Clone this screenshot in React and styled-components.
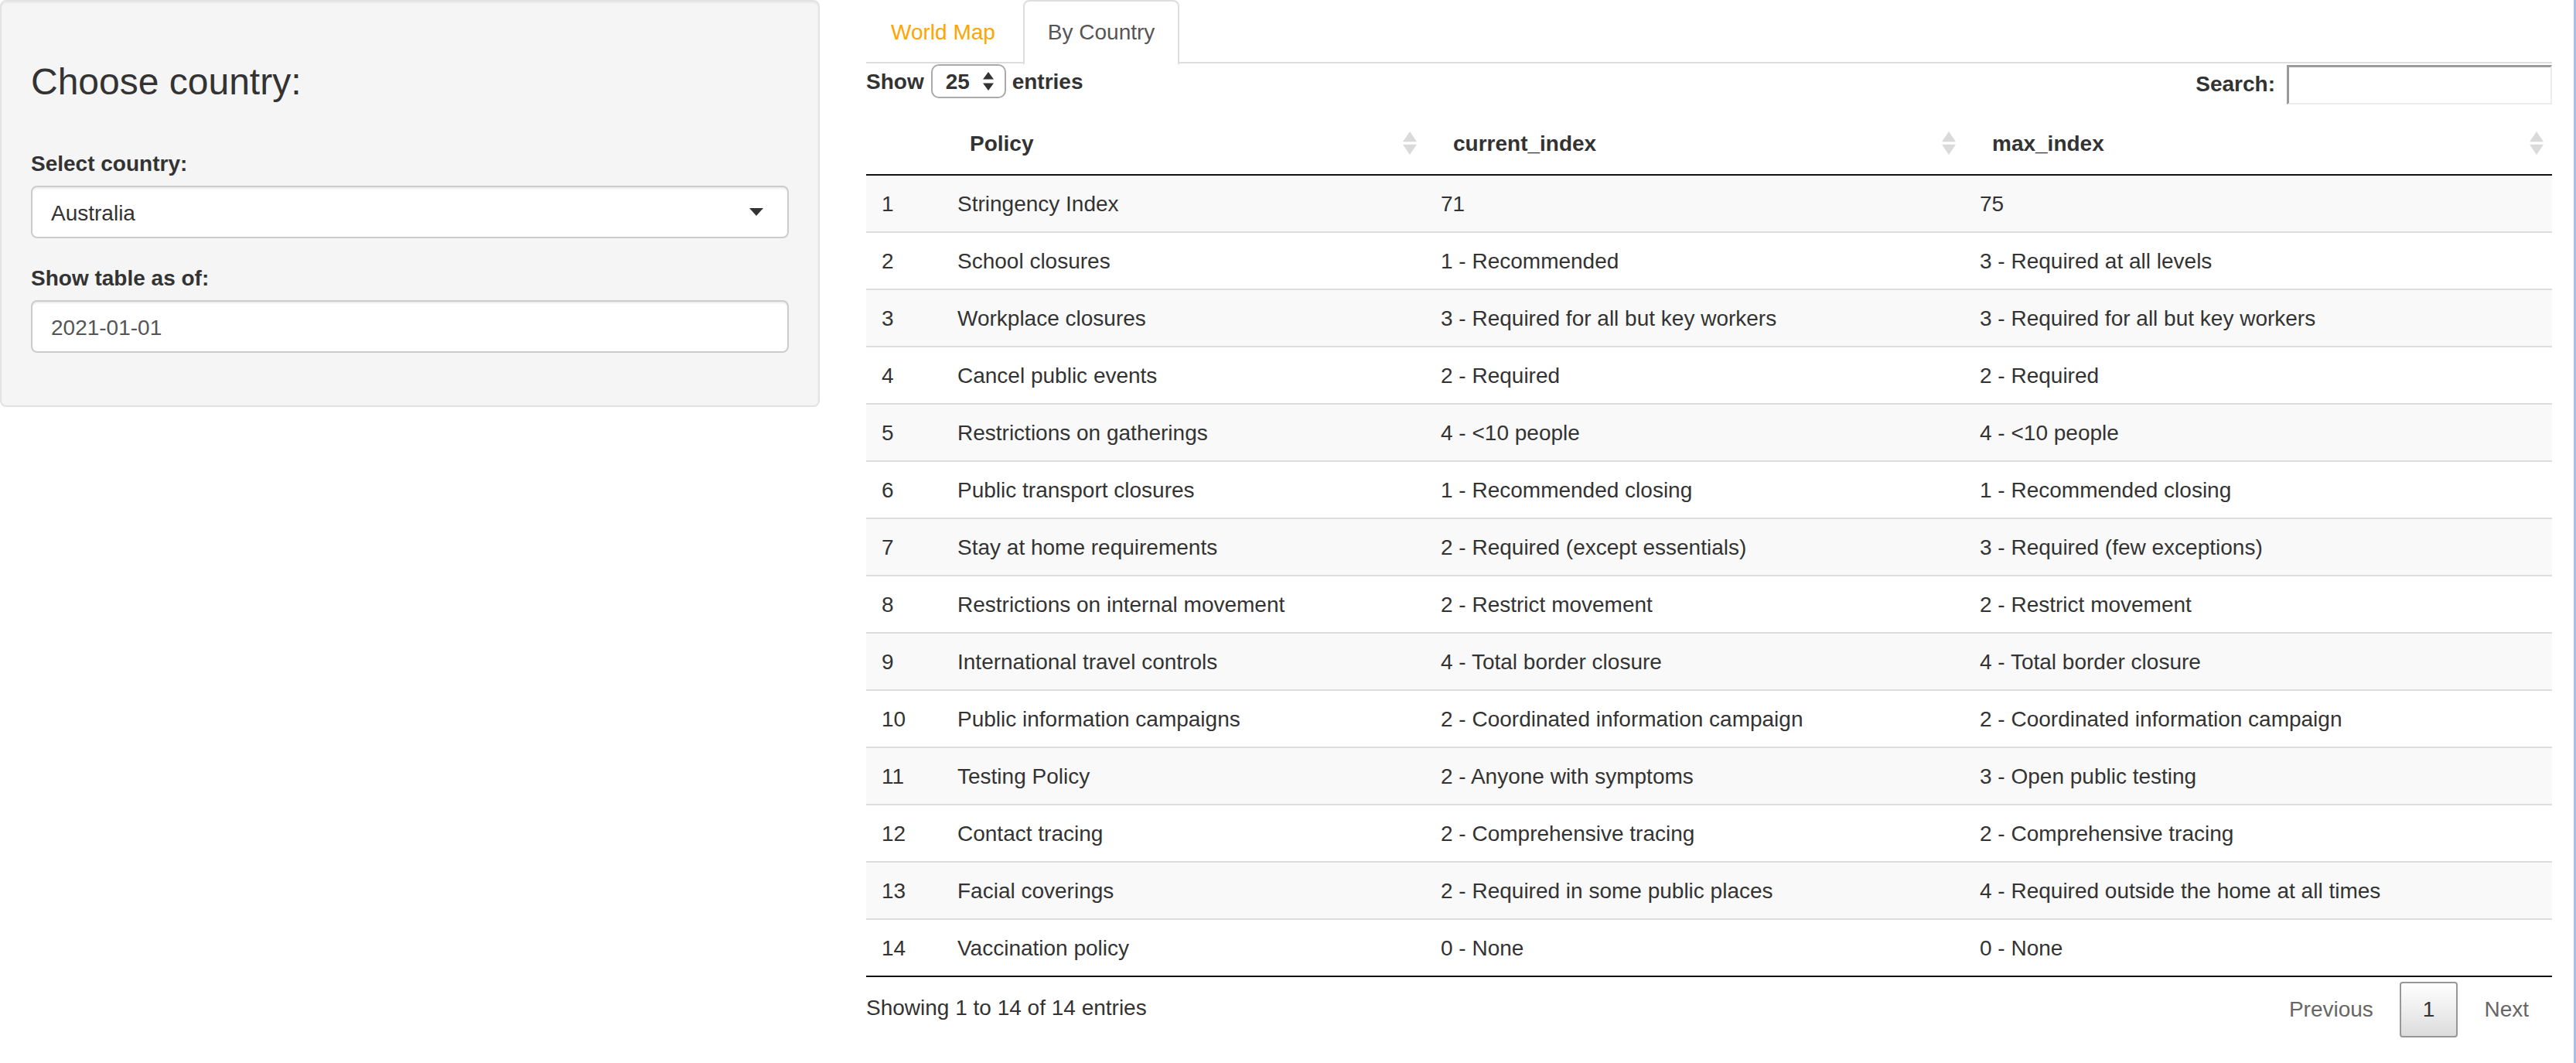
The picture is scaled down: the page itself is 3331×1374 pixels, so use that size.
import React from "react";
import styled, { createGlobalStyle } from "styled-components";

const rows = [
    ["Stringency Index", "71", "75"],
    ["School closures", "1 - Recommended", "3 - Required at all levels"],
    ["Workplace closures", "3 - Required for all but key workers", "3 - Required for all but key workers"],
    ["Cancel public events", "2 - Required", "2 - Required"],
    ["Restrictions on gatherings", "4 - <10 people", "4 - <10 people"],
    ["Public transport closures", "1 - Recommended closing", "1 - Recommended closing"],
    ["Stay at home requirements", "2 - Required (except essentials)", "3 - Required (few exceptions)"],
    ["Restrictions on internal movement", "2 - Restrict movement", "2 - Restrict movement"],
    ["International travel controls", "4 - Total border closure", "4 - Total border closure"],
    ["Public information campaigns", "2 - Coordinated information campaign", "2 - Coordinated information campaign"],
    ["Testing Policy", "2 - Anyone with symptoms", "3 - Open public testing"],
    ["Contact tracing", "2 - Comprehensive tracing", "2 - Comprehensive tracing"],
    ["Facial coverings", "2 - Required in some public places", "4 - Required outside the home at all times"],
    ["Vaccination policy", "0 - None", "0 - None"],
];

const columns = [
    { title: "", width: 49, sortable: false },
    { title: "Policy", width: 312.5, sortable: true },
    { title: "current_index", width: 348.5, sortable: true },
    { title: "max_index", width: 380, sortable: true },
];

function SortIcon() {
    return (
        <SortMark viewBox="0 0 9 15" width="9" height="15">
            <polygon points="4.5,0 9,6.6 0,6.6" fill="#dadada" />
            <polygon points="0,8.4 9,8.4 4.5,15" fill="#dadada" />
        </SortMark>
    );
}

function App() {
    return (
        <Page>
            <GlobalStyle />
            <Sidebar>
                <Well>
                    <PanelTitle>Choose country:</PanelTitle>
                    <FormGroup>
                        <Label>Select country:</Label>
                        <SelectInput>
                            Australia
                            <Caret />
                        </SelectInput>
                    </FormGroup>
                    <FormGroup>
                        <Label>Show table as of:</Label>
                        <TextInput>2021-01-01</TextInput>
                    </FormGroup>
                </Well>
            </Sidebar>

            <Main>
                <Tabs>
                    <Tab>World Map</Tab>
                    <Tab active>By Country</Tab>
                </Tabs>

                <Controls>
                    <LengthControl>
                        Show
                        <LengthSelect>
                            25
                            <ArrowPair width="7" height="12" viewBox="0 0 7 12">
                                <polygon points="3.5,0 7,4.8 0,4.8" fill="#333" />
                                <polygon points="0,7.2 7,7.2 3.5,12" fill="#333" />
                            </ArrowPair>
                        </LengthSelect>
                        entries
                    </LengthControl>
                    <SearchControl>
                        Search:
                        <SearchInput />
                    </SearchControl>
                </Controls>

                <Table>
                    <thead>
                        <tr>
                            {columns.map((c, i) => (
                                <HeadCell key={i} style={{ width: c.width }}>
                                    {c.title}
                                    {c.sortable && <SortIcon />}
                                </HeadCell>
                            ))}
                        </tr>
                    </thead>
                    <tbody>
                        {rows.map((r, i) => (
                            <Row key={i} odd={i % 2 === 0} first={i === 0} last={i === rows.length - 1}>
                                <td>{i + 1}</td>
                                <td>{r[0]}</td>
                                <td>{r[1]}</td>
                                <td>{r[2]}</td>
                            </Row>
                        ))}
                    </tbody>
                </Table>

                <Footer>
                    <Info>Showing 1 to 14 of 14 entries</Info>
                    <Paginate>
                        <PageButton>Previous</PageButton>
                        <PageButton current>1</PageButton>
                        <PageButton>Next</PageButton>
                    </Paginate>
                </Footer>
            </Main>
        </Page>
    );
};

export default App;

const GlobalStyle = createGlobalStyle`
    html, body {
        margin: 0;
        padding: 0;
        background: #fff;
    }
    body {
        font-family: "Liberation Sans", Helvetica, Arial, sans-serif;
        font-size: 14px;
        line-height: 1.42857;
        color: #333;
    }
    * {
        box-sizing: border-box;
    }
`;

const Page = styled.div`
    zoom: 2;
    width: 1665.5px;
    height: 687px;
    display: flex;
    align-items: flex-start;
    border-right: 1.5px solid #a9c0e4;
    overflow: hidden;
`;

const Sidebar = styled.div`
    width: 530px;
    flex: none;
`;

const Well = styled.div`
    background-color: #f5f5f5;
    border: 1px solid #e3e3e3;
    border-radius: 4px;
    box-shadow: inset 0 1px 1px rgba(0, 0, 0, 0.05);
    padding: 19px;
`;

const PanelTitle = styled.h3`
    font-size: 24px;
    font-weight: 500;
    line-height: 1.1;
    margin: 20px 0 28.6px;
`;

const FormGroup = styled.div`
    margin-bottom: 15px;
`;

const Label = styled.label`
    display: block;
    font-weight: bold;
    padding-top: 1px;
    margin-bottom: 4px;
`;

const SelectInput = styled.div`
    height: 34px;
    display: flex;
    align-items: center;
    justify-content: space-between;
    padding: 7px 12px 5px;
    background: #fff;
    border: 1px solid #ccc;
    border-radius: 4px;
    box-shadow: inset 0 1px 1px rgba(0, 0, 0, 0.075);
    color: #333;
`;

const Caret = styled.span`
    width: 0;
    height: 0;
    margin: -2px 3.5px 0 0;
    border-style: solid;
    border-width: 5px 4.5px 0 4.5px;
    border-color: #333 transparent transparent transparent;
`;

const TextInput = styled.div`
    height: 34px;
    display: flex;
    align-items: center;
    padding: 7px 12px 5px;
    background: #fff;
    border: 1px solid #ccc;
    border-radius: 4px;
    box-shadow: inset 0 1px 1px rgba(0, 0, 0, 0.075);
    color: #555;
`;

const Main = styled.div`
    width: 1090px;
    margin-left: 30px;
    flex: none;
`;

const Tabs = styled.div`
    display: flex;
    height: 41px;
    border-bottom: 1px solid #ddd;
`;

const Tab = styled.div`
    height: 42px;
    padding: 10px 15px;
    line-height: 20px;
    margin-right: 2px;
    border: 1px solid ${(p) => (p.active ? "#ddd" : "transparent")};
    border-bottom-color: transparent;
    border-radius: 4px 4px 0 0;
    background: ${(p) => (p.active ? "#fff" : "transparent")};
    color: ${(p) => (p.active ? "#555" : "#ffa500")};
`;

const Controls = styled.div`
    display: flex;
    justify-content: space-between;
    align-items: flex-start;
    height: 31.6px;
    padding-top: 0.5px;
`;

const LengthControl = styled.div`
    display: flex;
    align-items: center;
    height: 22px;
    padding-top: 1px;
    font-weight: bold;
`;

const LengthSelect = styled.div`
    width: 48.5px;
    height: 21.6px;
    margin: -1px 4px 0 4.5px;
    display: flex;
    align-items: center;
    justify-content: space-between;
    padding: 1px 7px 0 8.5px;
    border: 1px solid #aaa;
    border-radius: 5px;
    background: #fff;
    font-weight: bold;
`;

const ArrowPair = styled.svg`
    flex: none;
    margin-top: -1px;
`;

const SearchControl = styled.div`
    display: flex;
    align-items: center;
    font-weight: bold;
    height: 26px;
`;

const SearchInput = styled.div`
    width: 171.5px;
    height: 25.5px;
    margin-left: 7.5px;
    background: #fff;
    border-style: solid;
    border-width: 1.5px 1px 1px 1.5px;
    border-color: #9a9a9a #ececec #ececec #9a9a9a;
`;

const Table = styled.table`
    width: 1090px;
    table-layout: fixed;
    border-collapse: separate;
    border-spacing: 0;

    td {
        padding: 8.5px 10px 7.5px;
        line-height: 20px;
        white-space: nowrap;
    }
`;

const HeadCell = styled.th`
    position: relative;
    padding: 10.5px 18px 9.5px;
    line-height: 20px;
    text-align: left;
    font-weight: bold;
    border-bottom: 1px solid #111;
`;

const SortMark = styled.svg`
    position: absolute;
    right: 5.5px;
    top: 50%;
    margin-top: -7.5px;
`;

const Row = styled.tr`
    background: ${(p) => (p.odd ? "#f9f9f9" : "#fff")};

    td {
        border-top: ${(p) => (p.first ? "none" : "1px solid #ddd")};
        border-bottom: ${(p) => (p.last ? "1px solid #111" : "none")};
    }
`;

const Footer = styled.div`
    display: flex;
    justify-content: space-between;
    align-items: flex-start;
`;

const Info = styled.div`
    padding-top: 10px;
`;

const Paginate = styled.div`
    display: flex;
    padding-top: 3px;
`;

const PageButton = styled.div`
    min-width: 21px;
    padding: 7px 14px;
    margin-left: 2px;
    line-height: 20px;
    text-align: center;
    border: 1px solid ${(p) => (p.current ? "#979797" : "transparent")};
    border-radius: 2px;
    color: ${(p) => (p.current ? "#333" : "#666")};
    background: ${(p) => (p.current ? "linear-gradient(to bottom, #fff 0%, #dcdcdc 100%)" : "transparent")};
`;
